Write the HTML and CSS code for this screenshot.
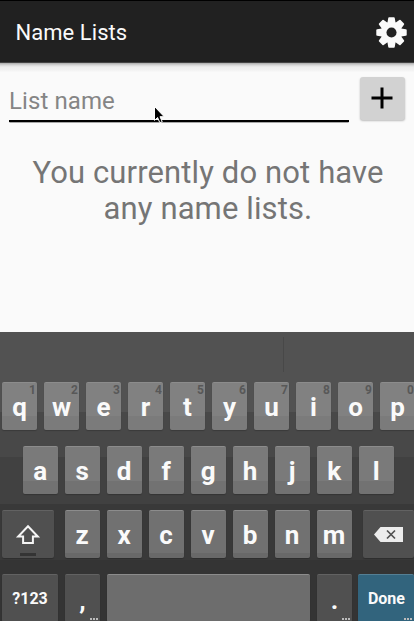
FILE: index.html
```
<!DOCTYPE html>
<html lang="en">
<head>
<meta charset="utf-8">
<title>Name Lists</title>
<link rel="stylesheet" href="styles.css">
</head>
<body>
<header class="bar">
  <h1 class="title">Name Lists</h1>
  <svg class="gear" viewBox="-16 -16 32 32" aria-label="Settings">
    <g fill="#fafafa">
      <circle r="11"/>
      <path id="tooth" d="M-4.2-10L-3.4-14.8Q-3.3-15.7-2.5-15.7H2.5Q3.3-15.7 3.4-14.8L4.2-10V10L3.4 14.8Q3.3 15.7 2.5 15.7H-2.5Q-3.3 15.7-3.4 14.8L-4.2 10Z"/>
      <use href="#tooth" transform="rotate(45)"/><use href="#tooth" transform="rotate(90)"/><use href="#tooth" transform="rotate(135)"/>
    </g>
    <circle r="5.2" fill="#212121"/>
  </svg>
</header>
<main class="content">
  <div class="form">
    <div class="field">List name</div>
    <div class="add"><svg width="22" height="22" viewBox="0 0 22 22"><path d="M11 .5v21M.5 11h21" stroke="#000" stroke-width="3"/></svg></div>
  </div>
  <p class="message">You currently do not have<br>any name lists.</p>
</main>
<section class="keyboard">
  <div class="suggest"><div class="divider"></div></div>
  <div class="row r1">
    <div class="key"><i>1</i><b>q</b></div><div class="key"><i>2</i><b>w</b></div><div class="key"><i>3</i><b>e</b></div><div class="key"><i>4</i><b>r</b></div><div class="key"><i>5</i><b>t</b></div><div class="key"><i>6</i><b>y</b></div><div class="key"><i>7</i><b>u</b></div><div class="key"><i>8</i><b>i</b></div><div class="key"><i>9</i><b>o</b></div><div class="key"><i>0</i><b>p</b></div>
  </div>
  <div class="row r2">
    <div class="key"><b>a</b></div><div class="key"><b>s</b></div><div class="key"><b>d</b></div><div class="key"><b>f</b></div><div class="key"><b>g</b></div><div class="key"><b>h</b></div><div class="key"><b>j</b></div><div class="key"><b>k</b></div><div class="key"><b>l</b></div>
  </div>
  <div class="row r3">
    <div class="key dark shift"><svg width="26" height="22" viewBox="0 0 26 22"><path d="M13 2.2L22.8 12.5H17.9V19H8.1V12.5H3.2Z" fill="none" stroke="#f5f5f5" stroke-width="2"/></svg><span class="lock"></span></div>
    <div class="key"><b>z</b></div><div class="key"><b>x</b></div><div class="key"><b>c</b></div><div class="key"><b>v</b></div><div class="key"><b>b</b></div><div class="key"><b>n</b></div><div class="key"><b>m</b></div>
    <div class="key dark back"><svg width="29" height="15" viewBox="0 0 29 15"><path d="M0 7.5L6.5 0H29V15H6.5Z" fill="#ececec"/><path d="M13 3.5l8 8M21 3.5l-8 8" stroke="#505050" stroke-width="1.7"/></svg></div>
  </div>
  <div class="row r4">
    <div class="key dark sym"><b>?123</b></div>
    <div class="key dark punct"><b>,</b><span class="dots"></span></div>
    <div class="key space"></div>
    <div class="key dark punct"><b>.</b><span class="dots"></span></div>
    <div class="key done"><b>Done</b><span class="dots"></span></div>
  </div>
</section>
<svg class="cursor" width="14" height="20" viewBox="0 0 14 20"><path d="M1.5 1.5V15.4L4.6 12.5L6.8 17.7L9.2 16.7L7 11.7H11.2Z" fill="#000" stroke="#fff" stroke-width="1"/></svg>
</body>
</html>
```
FILE: styles.css
```
* { box-sizing: border-box; }
body {
  margin: 0;
  width: 414px;
  height: 621px;
  overflow: hidden;
  position: relative;
  display: flex;
  flex-direction: column;
  background: #fafafa;
  font-family: Roboto, sans-serif;
}
.bar {
  height: 63px;
  flex: none;
  display: flex;
  align-items: center;
  justify-content: space-between;
  padding: 2px 7px 0 15.5px;
  background: #212121;
  border-top: 1px solid #000;
  border-bottom: 1px solid #444;
}
.title {
  margin: 0;
  font-size: 22px;
  line-height: 26px;
  font-weight: 400;
  letter-spacing: .05px;
  color: #fafafa;
}
.gear { width: 31px; height: 31px; }
.content {
  height: 269px;
  flex: none;
  background: linear-gradient(#aaa 0, #d6d6d6 2px, #eee 4px, #f4f4f4 8px, #fafafa 9px);
}
.form {
  display: flex;
  justify-content: space-between;
  padding: 14px 9px 0;
}
.field {
  width: 340px;
  height: 45px;
  padding-top: 10px;
  border-bottom: 2px solid #000;
  box-shadow: 0 1px 0 -.5px #555;
  font-size: 24px;
  line-height: 29px;
  letter-spacing: .1px;
  color: #858585;
}
.add {
  width: 45px;
  height: 43px;
  display: flex;
  align-items: center;
  justify-content: center;
  padding: 0 1px 1px 0;
  border-radius: 3px;
  background: #d2d2d2;
  box-shadow: 0 1px 2px rgba(0, 0, 0, .25);
}
.message {
  margin: 33px 0 0;
  padding-left: 2px;
  text-align: center;
  font-size: 31px;
  line-height: 36px;
  letter-spacing: .12px;
  color: #757575;
}
.keyboard {
  height: 289px;
  flex: none;
  background: linear-gradient(#525252 0 80px, #484848 80px, #484848 125px, #414141 125px, #414141 172px, #393939 172px, #393939 228px, #343434 228px);
}
.suggest {
  height: 50px;
  padding: 5px 0 0 283px;
}
.divider { width: 1px; height: 35px; background: #484848; }
.row {
  display: flex;
  gap: 7px;
  height: 48px;
  margin-bottom: 16px;
}
.r1, .r3, .r4 { padding-left: 2px; }
.r2 { padding-left: 22.6px; }
.key {
  position: relative;
  width: 35px;
  height: 48px;
  flex: none;
  display: flex;
  align-items: center;
  justify-content: center;
  border-radius: 2px;
  border-top: 1px solid #8c8c8c;
  background: linear-gradient(#818181 0 33px, #7b7b7b 33px);
  box-shadow: 0 1px 1px rgba(0, 0, 0, .2);
  color: #fafafa;
}
.r2 .key { background: linear-gradient(#7a7a7a 0 34px, #727272 34px); }
.r3 .key { background: linear-gradient(#717171 0 42px, #696969 42px); }
.key b { font-size: 26px; line-height: 30px; font-weight: 700; margin-top: 0; }
.key i {
  position: absolute;
  top: 0;
  right: 1px;
  font: 700 12px/14px Roboto, sans-serif;
  color: #585858;
}
.row .dark { background: #505050; border-top-color: #626262; }
.shift { width: 51.5px; margin-right: 4px; }
.lock {
  position: absolute;
  left: 18px;
  bottom: 2px;
  width: 16px;
  height: 3px;
  background: #343434;
}
.back { width: 51px; margin-left: 4px; }
.sym { width: 56px; }
.row .sym b, .row .done b { font-size: 16px; line-height: 20px; margin-top: 1px; }
.row .punct b { margin-top: 2px; }
.row .space { width: 203px; background: #6d6d6d; }
.row .done { width: 56px; margin-left: -.6px; background: #32647d; border-top-color: #547f94; }
.dots {
  position: absolute;
  right: 2px;
  bottom: 2px;
  width: 8px;
  height: 2px;
  background: repeating-linear-gradient(90deg, #bbb 0 2px, transparent 2px 3px);
}
.cursor { position: absolute; left: 153px; top: 105px; }
```
